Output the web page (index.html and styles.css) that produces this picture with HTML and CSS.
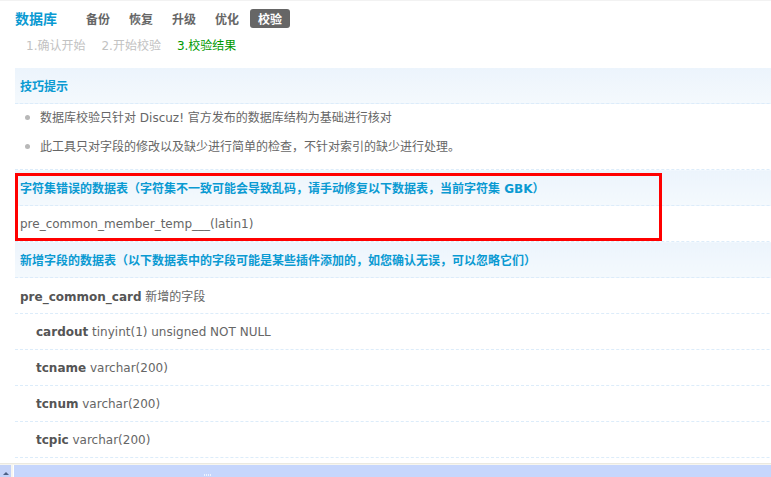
FILE: index.html
```html
<!DOCTYPE html>
<html lang="zh-CN">
<head>
<meta charset="utf-8">
<title>数据库 - 校验</title>
<link rel="stylesheet" href="styles.css">
</head>
<body>
<div class="page">
  <div class="topbar">
    <h3 class="title">数据库</h3>
    <ul class="tabs">
      <li>备份</li>
      <li>恢复</li>
      <li>升级</li>
      <li>优化</li>
      <li class="on">校验</li>
    </ul>
  </div>
  <div class="steps">
    <span>1.确认开始</span>
    <span>2.开始校验</span>
    <span class="cur">3.校验结果</span>
  </div>

  <table class="tb">
    <tr class="hd"><th>技巧提示</th></tr>
    <tr class="tips">
      <td>
        <ul class="tiplist">
          <li>数据库校验只针对 Discuz! 官方发布的数据库结构为基础进行核对</li>
          <li>此工具只对字段的修改以及缺少进行简单的检查，不针对索引的缺少进行处理。</li>
        </ul>
      </td>
    </tr>
    <tr class="hd"><th>字符集错误的数据表（字符集不一致可能会导致乱码，请手动修复以下数据表，当前字符集 GBK）</th></tr>
    <tr><td>pre_common_member_temp___(latin1)</td></tr>
    <tr class="hd"><th>新增字段的数据表（以下数据表中的字段可能是某些插件添加的，如您确认无误，可以忽略它们）</th></tr>
    <tr><td><b>pre_common_card</b> 新增的字段</td></tr>
    <tr class="sub"><td><b>cardout</b> tinyint(1) unsigned NOT NULL</td></tr>
    <tr class="sub"><td><b>tcname</b> varchar(200)</td></tr>
    <tr class="sub"><td><b>tcnum</b> varchar(200)</td></tr>
    <tr class="sub"><td><b>tcpic</b> varchar(200)</td></tr>
    <tr class="sub"><td><b>tid</b> tinyint(1) NOT NULL</td></tr>
  </table>

  <div class="markbox"></div>
</div>

<div class="hscroll">
  <div class="hs-btn"><span class="hs-arrow"></span></div>
  <div class="hs-thumb"><span class="hs-grip"></span></div>
</div>
</body>
</html>
```

FILE: styles.css
```css
html, body {
  margin: 0;
  padding: 0;
  overflow: hidden;
  background: #fff;
}

body {
  font-family: "DejaVu Sans", "Noto Sans CJK SC", sans-serif;
  font-size: 12px;
  color: #666;
  border-top: 1px solid #f2f2f2;
}

.page {
  position: relative;
  padding-left: 15px;
  width: 1000px;
}

.topbar {
  display: flex;
  align-items: center;
  padding-top: 7px;
  height: 20px;
}

.title {
  margin: 0;
  font-size: 14px;
  font-weight: bold;
  color: #0a9ad2;
  line-height: 19px;
  font-family: "Noto Sans CJK SC", sans-serif;
}

.tabs {
  display: flex;
  gap: 3px;
  list-style: none;
  margin: 0 0 0 21px;
  padding: 0;
}

.tabs li {
  padding: 0 8px;
  height: 19px;
  line-height: 19px;
  font-weight: bold;
  color: #666;
  border-radius: 3px;
  font-family: "Noto Sans CJK SC", sans-serif;
}

.tabs li.on {
  background: #666;
  color: #fff;
}

.steps {
  display: flex;
  gap: 16px;
  margin-top: 8px;
  padding-left: 11px;
  height: 20px;
  line-height: 20px;
  color: #c2c2c2;
}

.steps .cur {
  color: #090;
}

.tb {
  margin-top: 12px;
  width: 100%;
  border-collapse: collapse;
}

.tb th,
.tb td {
  height: 35px;
  padding: 0 5px;
  text-align: left;
  border-bottom: 1px dashed #dcecfa;
  white-space: nowrap;
}

.tb tr.hd th {
  font-weight: bold;
  color: #0a9ad2;
  background: linear-gradient(#ecf4fc, #f4f9fd);
}

.tb td b {
  color: #555;
}

.tb tr.tips td {
  height: auto;
  padding-top: 0;
  padding-bottom: 7px;
}

.tiplist {
  list-style: none;
  margin: 0;
  padding: 0;
}

.tiplist li {
  height: 29px;
  line-height: 29px;
}

.tiplist li::before {
  content: "";
  display: inline-block;
  width: 5px;
  height: 5px;
  border-radius: 50%;
  background: #b8b8b8;
  margin: 0 10px 0 5px;
  vertical-align: middle;
  position: relative;
  top: -1px;
}

.tb tr.sub td {
  padding-left: 21px;
}

/* red annotation rectangle drawn over the table */
.markbox {
  position: absolute;
  left: 15px;
  top: 172px;
  width: 647px;
  height: 68px;
  box-sizing: border-box;
  border: 3px solid #ff0000;
}

/* horizontal scrollbar at the bottom of the window */
.hscroll {
  position: fixed;
  left: 0;
  right: 0;
  bottom: 0;
  height: 14px;
  border-top: 1px solid #ebe9e0;
  background: #f6f5ef;
  display: flex;
  gap: 2px;
  padding-top: 1px;
  box-sizing: border-box;
}

.hs-btn {
  width: 11px;
  background: #c4d3f8;
  display: flex;
  align-items: flex-end;
  justify-content: center;
}

.hs-arrow {
  width: 0;
  height: 0;
  border-left: 3px solid transparent;
  border-right: 3px solid transparent;
  border-bottom: 3px solid #4d6185;
  margin-bottom: 2px;
}

.hs-thumb {
  flex: 1;
  background: #c6d6fc;
  border-left: 1px solid #fff;
  display: flex;
  justify-content: center;
  align-items: flex-end;
  padding-right: 370px;
}

.hs-grip {
  width: 7px;
  height: 2px;
  margin-bottom: 1px;
  background: repeating-linear-gradient(90deg, #eef3fe 0 1px, transparent 1px 2px);
}
```
